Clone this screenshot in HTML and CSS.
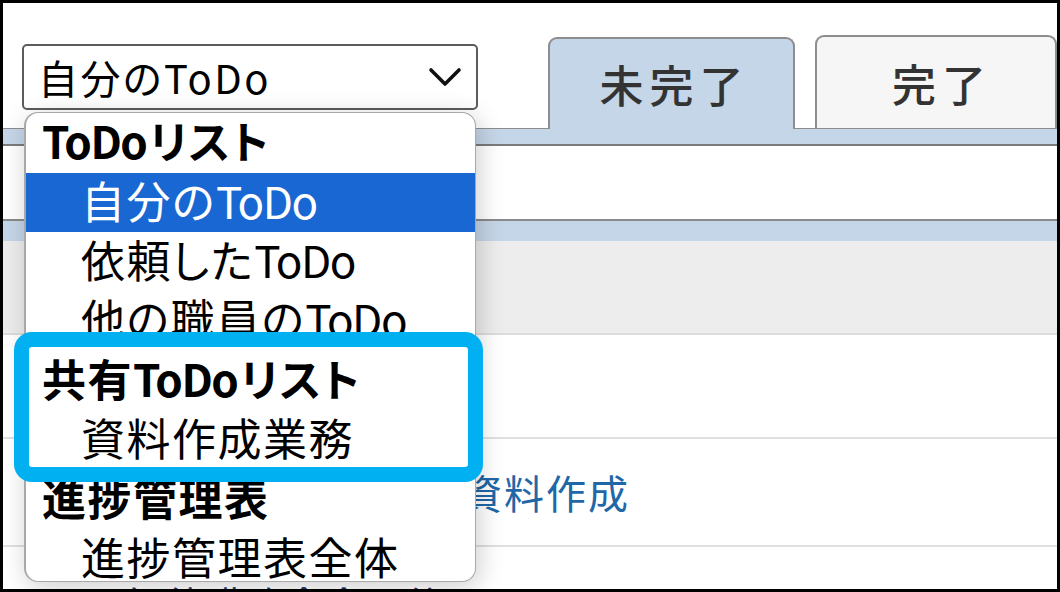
FILE: index.html
```html
<!DOCTYPE html>
<html lang="ja">
<head>
<meta charset="utf-8">
<title>ToDo</title>
<link rel="stylesheet" href="styles.css">
</head>
<body>
<div class="frame">
  <div class="toolbar">
    <div class="select">
      <span class="select-value">自分のToDo</span>
      <svg class="chevron" width="34" height="22" viewBox="0 0 34 22"><path d="M3 4 L17 18 L31 4" fill="none" stroke="#111" stroke-width="3.6" stroke-linecap="round" stroke-linejoin="round"/></svg>
    </div>
    <div class="tabs">
      <div class="tab tab-active">未完了</div>
      <div class="tab tab-plain">完了</div>
    </div>
  </div>
  <div class="tabbar"></div>
  <div class="gap"></div>
  <div class="table">
    <div class="thead">
      <div class="thead-band"></div>
      <div class="thead-body"></div>
    </div>
    <div class="row row-empty"></div>
    <div class="row row-item"><span class="cell">共有ToDo</span><a class="link">資料作成</a></div>
    <div class="row row-item"><span class="cell dark">二次 他職務命令の件</span><span></span></div>
  </div>
  <ul class="dropdown">
    <li class="dd-item dd-group"><span class="latin">ToDo</span>リスト</li>
    <li class="dd-item dd-selected">自分の<span class="latin">ToDo</span></li>
    <li class="dd-item">依頼した<span class="latin">ToDo</span></li>
    <li class="dd-item">他の職員の<span class="latin">ToDo</span></li>
    <li class="dd-item dd-group">共有<span class="latin">ToDo</span>リスト</li>
    <li class="dd-item">資料作成業務</li>
    <li class="dd-item dd-group">進捗管理表</li>
    <li class="dd-item">進捗管理表全体</li>
  </ul>
  <div class="annotation"></div>
</div>
</body>
</html>
```

FILE: styles.css
```css
html, body {
  margin: 0;
  padding: 0;
  background: #fff;
}

.frame {
  width: 1060px;
  height: 592px;
  box-sizing: border-box;
  border: 3px solid #000;
  position: relative;
  overflow: hidden;
  background: #fff;
  font-family: "Noto Sans CJK JP", sans-serif;
  color: #000;
}

.toolbar {
  display: flex;
  align-items: flex-end;
  height: 125px;
  padding-left: 19px;
}

.select {
  align-self: flex-start;
  margin-top: 41px;
  width: 456px;
  height: 66px;
  box-sizing: border-box;
  border: 2px solid #5c5c5c;
  border-radius: 5px;
  display: flex;
  align-items: center;
  justify-content: space-between;
  padding: 0 14px 0 14px;
  background: #fff;
  font-size: 40px;
  line-height: 1;
  letter-spacing: 2.5px;
  font-feature-settings: "palt";
}

.chevron {
  display: block;
}

.tabs {
  display: flex;
  align-items: flex-end;
  gap: 20px;
  margin-left: 70px;
}

.tab {
  box-sizing: border-box;
  border: 2px solid #8d8d8d;
  border-bottom: none;
  border-radius: 9px 9px 0 0;
  display: flex;
  align-items: center;
  justify-content: center;
  font-size: 44px;
  line-height: 1;
  color: #333;
  font-weight: 500;
  letter-spacing: 6px;
  padding-left: 6px;
}

.tab-active {
  width: 247px;
  height: 92px;
  background: #c5d6e8;
  margin-bottom: -1px;
  position: relative;
  z-index: 1;
}

.tab-plain {
  width: 242px;
  height: 93px;
  background: #f6f6f6;
  padding-left: 12px;
}

.tabbar {
  height: 15px;
  background: #c5d6e8;
  border-top: 1px solid #8d8d8d;
  border-bottom: 2px solid #7b7b7b;
}

.gap {
  height: 73px;
}

.thead {
  border-top: 2px solid #8a8a8a;
  border-bottom: 2px solid #dcdcdc;
}

.thead-band {
  height: 20px;
  background: #c5d6e8;
}

.thead-body {
  height: 92px;
  background: #ededed;
}

.row {
  display: grid;
  grid-template-columns: 387px 1fr;
  align-items: center;
  padding-left: 72px;
  border-bottom: 2px solid #e0e0e0;
  font-size: 40px;
  line-height: 1;
}

.row-empty {
  height: 102px;
}

.row-item {
  height: 106px;
}

.cell {
  color: #1f4f86;
}

.cell.dark {
  color: #24406a;
  padding-top: 8px;
}

.link {
  color: #1f67a6;
  letter-spacing: 2px;
}

.dropdown {
  position: absolute;
  left: 21px;
  top: 109px;
  width: 452px;
  height: 470px;
  box-sizing: border-box;
  margin: 0;
  padding: 0;
  list-style: none;
  background: #fff;
  border: 1px solid #a8a8a8;
  border-left: 2px solid #a8a8a8;
  border-radius: 14px;
  box-shadow: 3px 5px 26px rgba(0, 0, 0, 0.2);
  overflow: hidden;
  font-size: 44px;
  z-index: 2;
}

.dd-item {
  box-sizing: border-box;
  height: 59.4px;
  display: flex;
  align-items: center;
  padding-left: 55px;
  padding-bottom: 6px;
  letter-spacing: 1.5px;
  line-height: 1;
  font-feature-settings: "palt";
  white-space: nowrap;
}

.dd-item:first-child {
  height: 60px;
}

.latin {
  letter-spacing: -1.5px;
  margin-right: 3px;
}

.dd-group {
  padding-left: 16px;
  font-weight: 700;
}

.dd-selected {
  background: #1967d2;
  color: #fff;
}

.annotation {
  position: absolute;
  left: 11px;
  top: 329px;
  width: 469px;
  height: 150px;
  box-sizing: border-box;
  border: 15px solid #00b0f0;
  border-radius: 18px;
  z-index: 3;
}
```
